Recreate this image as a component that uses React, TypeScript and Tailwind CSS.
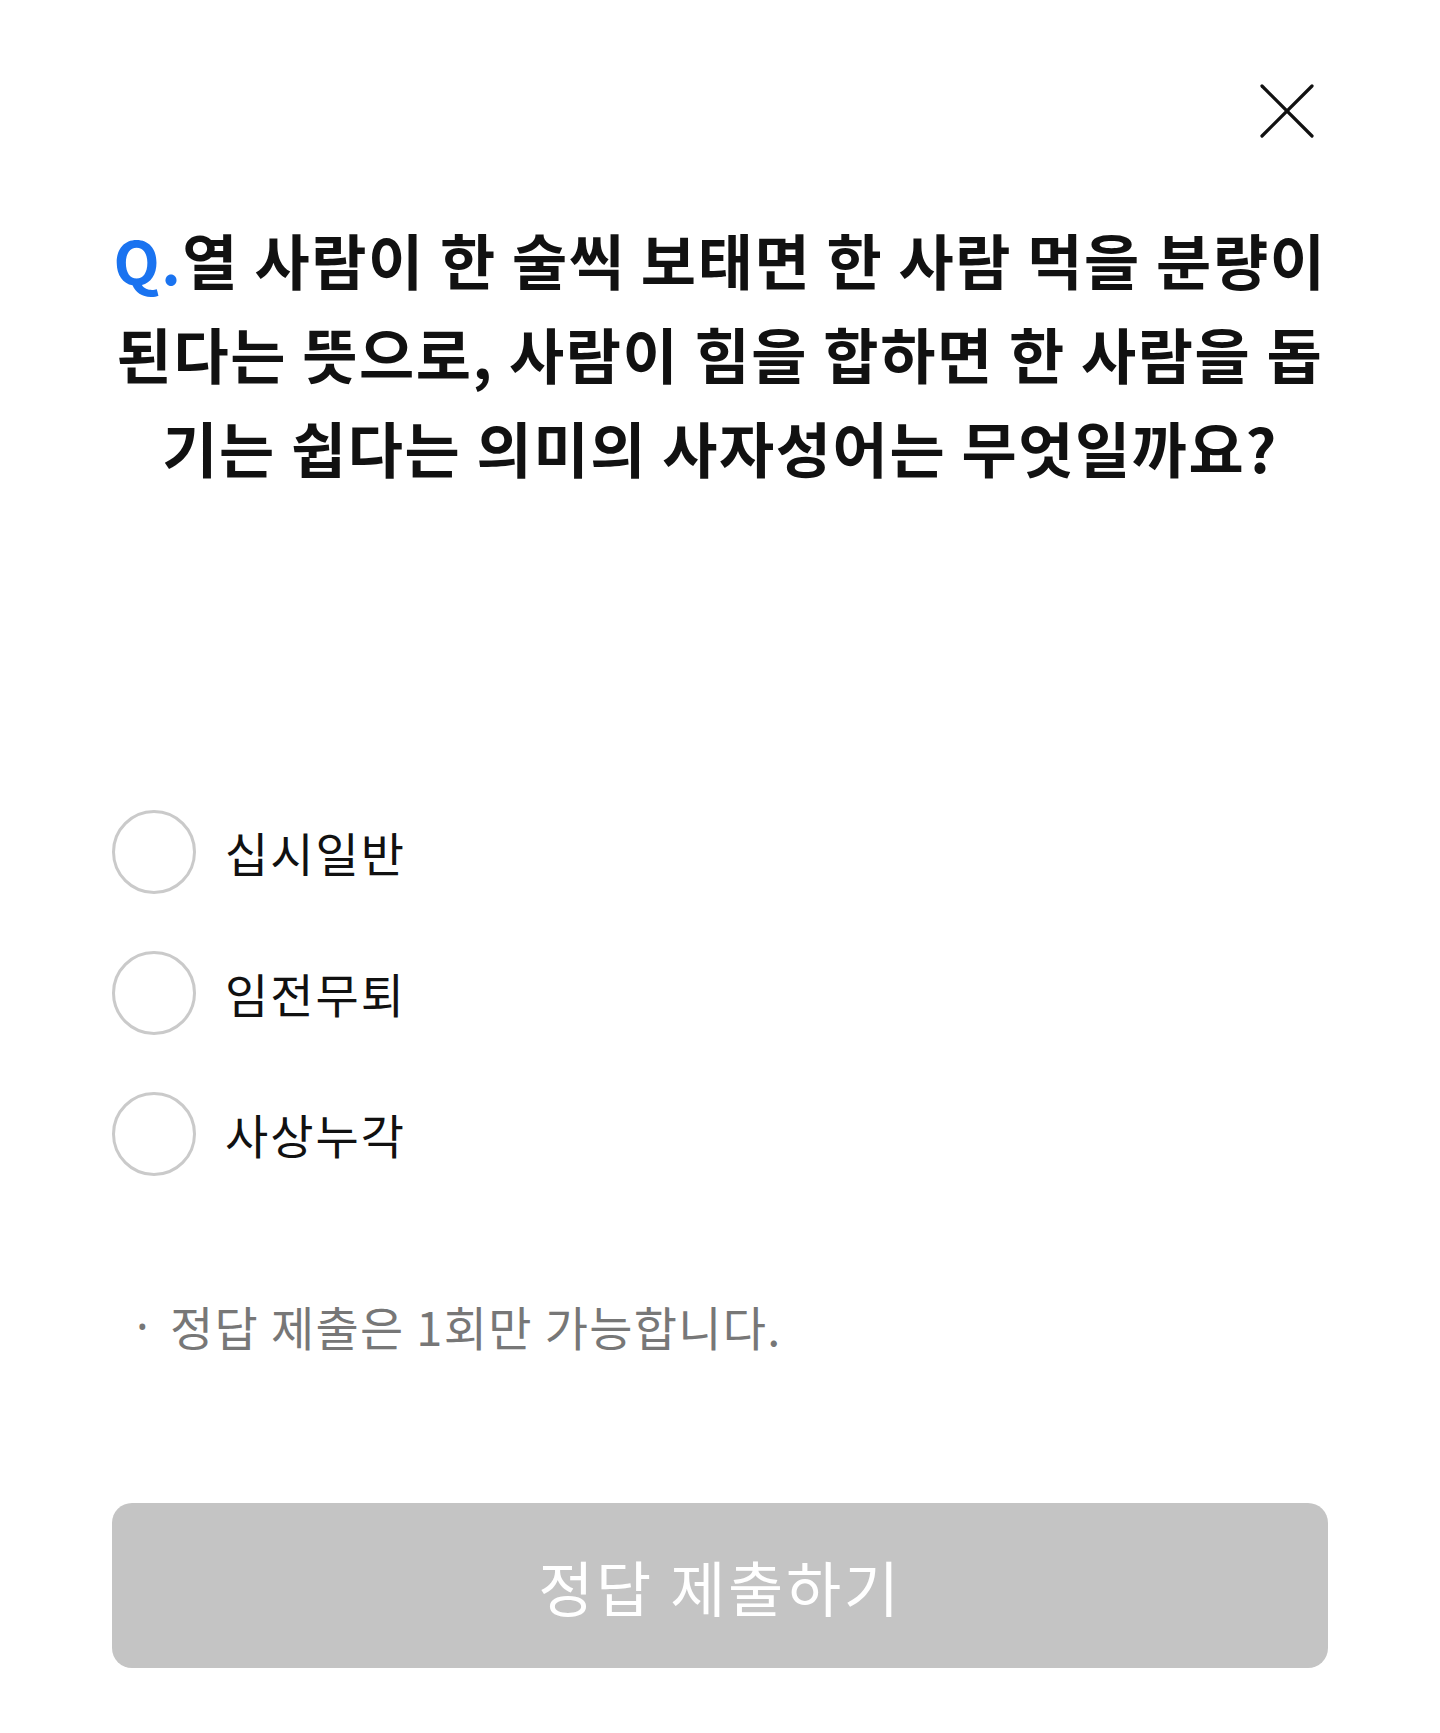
import React from 'react'

const font = { fontFamily: '"Noto Sans CJK KR", "Noto Sans", sans-serif' }

const options = ['십시일반', '임전무퇴', '사상누각']

function CloseIcon() {
  return (
    <svg width="54" height="54" viewBox="0 0 54 54" fill="none" stroke="#111" strokeWidth="3.2" strokeLinecap="round">
      <path d="M2 2 L52 52" />
      <path d="M52 2 L2 52" />
    </svg>
  )
}

export default function App() {
  return (
    <div className="min-h-[1733px] w-[1440px] bg-white px-[112px] pb-[65px]" style={font}>
      <div className="flex justify-end pt-[84px] pr-[14px]">
        <button aria-label="닫기" className="block">
          <CloseIcon />
        </button>
      </div>

      <h2 className="mt-[74px] text-center text-[60px] leading-[94px] font-bold tracking-[1.6px] text-[#111]">
        <span className="block whitespace-nowrap">
          <span className="text-[#1a73f0]">Q.</span>열 사람이 한 술씩 보태면 한 사람 먹을 분량이
        </span>
        <span className="block whitespace-nowrap">된다는 뜻으로, 사람이 힘을 합하면 한 사람을 돕</span>
        <span className="block whitespace-nowrap">기는 쉽다는 의미의 사자성어는 무엇일까요?</span>
      </h2>

      <ul className="mt-[316px] flex flex-col gap-[57px]">
        {options.map((opt) => (
          <li key={opt}>
            <label className="flex cursor-pointer items-center gap-[29px]">
              <span className="h-[84px] w-[84px] shrink-0 rounded-full border-[3px] border-[#cacaca] bg-white" />
              <span className="text-[47px] leading-[60px] tracking-[2px] text-[#111]">{opt}</span>
            </label>
          </li>
        ))}
      </ul>

      <p className="mt-[117px] flex items-center pl-[24px] text-[47px] leading-[66px] text-[#777]">
        <span className="inline-block w-[34px]" style={{ fontFamily: '"Noto Sans", sans-serif' }}>·</span>
        <span className="tracking-[1.3px]">정답 제출은 1회만 가능합니다.</span>
      </p>

      <button
        disabled
        className="mt-[144px] flex h-[165px] w-full items-center justify-center rounded-[20px] bg-[#c4c4c4] text-[60px] tracking-[2.7px] text-white"
      >
        정답 제출하기
      </button>
    </div>
  )
}
